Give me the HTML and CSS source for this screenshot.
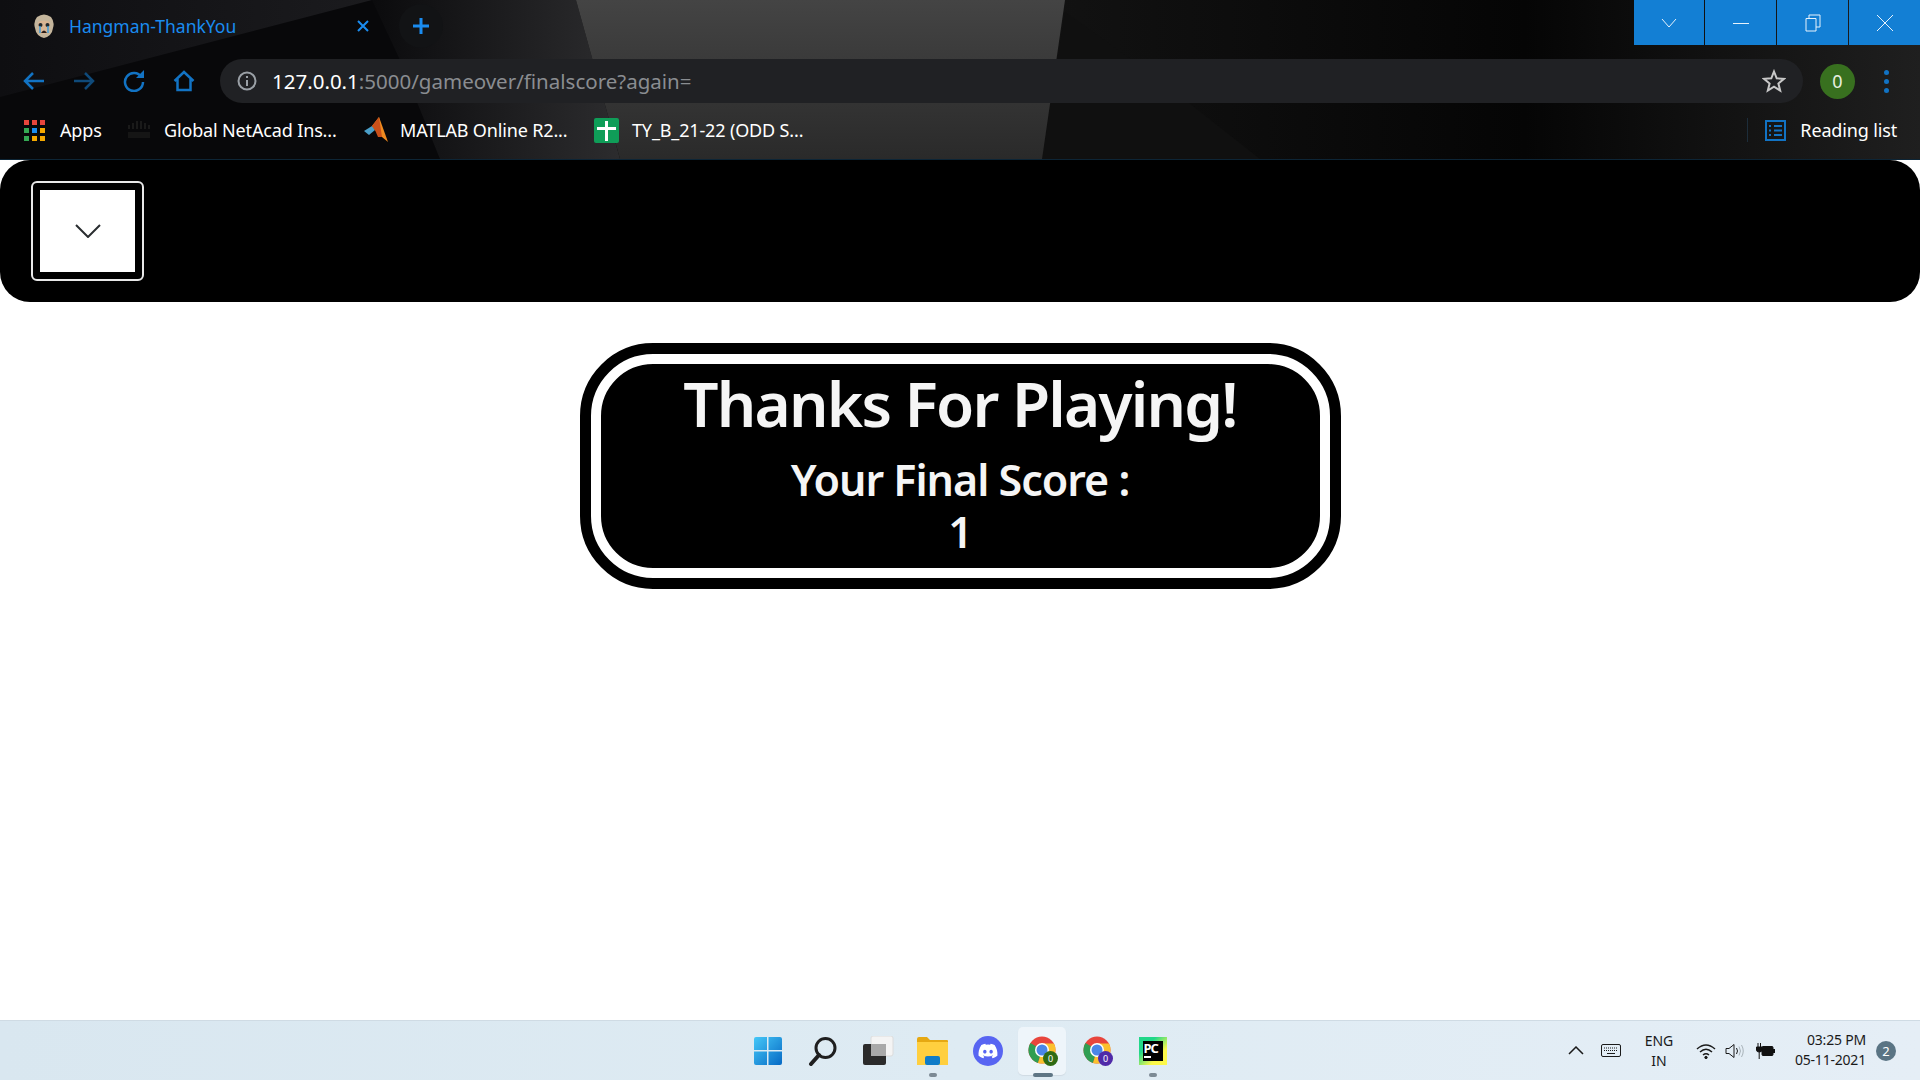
FILE: index.html
```html
<!DOCTYPE html>
<html lang="en">
<head>
    <meta charset="UTF-8">
    <title>Hangman-ThankYou</title>
    <link rel="stylesheet" href="styles.css">
</head>
<body>

<!-- Browser frame -->
<header class="browser">
    <svg class="browser-bg" width="1920" height="159" viewBox="0 0 1920 159">
        <defs>
            <linearGradient id="greyShard" x1="0" y1="0" x2="0" y2="1">
                <stop offset="0" stop-color="#444444"/>
                <stop offset="1" stop-color="#2a2a2a"/>
            </linearGradient>
            <linearGradient id="topLeftShard" x1="0" y1="0" x2="1" y2="0">
                <stop offset="0" stop-color="#0e0e11"/>
                <stop offset="1" stop-color="#1b1b1e"/>
            </linearGradient>
            <linearGradient id="midShard" x1="0" y1="0" x2="1" y2="0">
                <stop offset="0" stop-color="#0b0b0d"/>
                <stop offset="1" stop-color="#2c2c2e"/>
            </linearGradient>
            <linearGradient id="rightShard" x1="0" y1="0" x2="1" y2="0">
                <stop offset="0" stop-color="#121212"/>
                <stop offset=".55" stop-color="#050505"/>
                <stop offset="1" stop-color="#1f1f1f"/>
            </linearGradient>
        </defs>
        <rect width="1920" height="159" fill="#08080a"/>
        <polygon points="0,0 372,0 0,97" fill="url(#topLeftShard)"/>
        <polygon points="372,0 576,0 620,159 440,159 400,60" fill="url(#midShard)"/>
        <polygon points="1050,0 1920,0 1920,159 1042,159" fill="url(#rightShard)"/>
        <polygon points="1065,12 1160,80 1260,159 1042,159" fill="#101010"/>
        <polygon points="576,0 1065,0 1042,159 620,159" fill="url(#greyShard)"/>
    </svg>

    <div class="tab-row">
        <div class="tab">
            <svg class="favicon" width="24" height="26" viewBox="0 0 24 26">
                <path d="M5 4 Q12 -1 19 4 Q23 9 21 15 Q20 23 12 25 Q4 23 3 15 Q1 9 5 4z" fill="#c4b59c"/>
                <path d="M6 9 Q12 6 18 9 L17 19 Q12 23 7 19z" fill="#d9b594"/>
                <circle cx="8.500" cy="12" r="2" fill="#20262c"/>
                <circle cx="15.500" cy="12" r="2" fill="#20262c"/>
                <path d="M8 13 V20 M16 13 V20" stroke="#3f9ad6" stroke-width="1.500"/>
                <path d="M9 20 Q12 15 15 20z" fill="#2a1c16"/>
            </svg>
            <span class="tab-title">Hangman-ThankYou</span>
            <svg class="tab-close" width="12" height="12" viewBox="0 0 12 12"><path d="M1 1 L11 11 M11 1 L1 11"/></svg>
        </div>
        <div class="new-tab">
            <svg width="18" height="18" viewBox="0 0 18 18"><path d="M9 1 V17 M1 9 H17"/></svg>
        </div>
        <div class="window-buttons">
            <div class="win-btn"><svg width="16" height="16" viewBox="0 0 16 16"><path d="M1 4 L8 12 L15 4"/></svg></div>
            <div class="win-btn"><svg width="16" height="16" viewBox="0 0 16 16"><path d="M0 8.500 H16"/></svg></div>
            <div class="win-btn"><svg width="16" height="18" viewBox="0 0 16 18"><path d="M1 4.500 H11 V17 H1z M4 4.500 V1 H15 V13 H11"/></svg></div>
            <div class="win-btn"><svg width="18" height="18" viewBox="0 0 18 18"><path d="M1 1 L17 17 M17 1 L1 17"/></svg></div>
        </div>
    </div>

    <div class="toolbar">
        <svg class="tool-icon" width="22" height="20" viewBox="0 0 22 20"><path d="M21 10 H2 M10 2 L2 10 L10 18"/></svg>
        <svg class="tool-icon dim" width="22" height="20" viewBox="0 0 22 20"><path d="M1 10 H20 M12 2 L20 10 L12 18"/></svg>
        <svg class="tool-icon" width="22" height="22" viewBox="0 0 22 22"><path d="M18.500 7 A9 9 0 1 0 20 12"/><path class="fill" d="M13 8 L21 8 L21 0z"/></svg>
        <svg class="tool-icon" width="22" height="22" viewBox="0 0 22 22"><path d="M1.500 11 L11 2 L20.500 11 M4.500 9 V20 H17.500 V9"/></svg>
        <div class="omnibox">
            <svg class="info" width="20" height="20" viewBox="0 0 20 20">
                <circle cx="10" cy="10" r="8.500"/>
                <path d="M10 9 V15 M10 5 V7"/>
            </svg>
            <span class="url"><span class="url-host">127.0.0.1</span>:5000/gameover/finalscore?again=</span>
            <svg class="star" width="24" height="24" viewBox="0 0 24 24"><path d="M12 2.500 L14.700 9.300 L22 9.800 L16.400 14.500 L18.200 21.600 L12 17.700 L5.800 21.600 L7.600 14.500 L2 9.800 L9.300 9.300z"/></svg>
        </div>
        <div class="avatar">0</div>
        <div class="kebab"><i></i><i></i><i></i></div>
    </div>

    <div class="bookmarks">
        <div class="bookmark apps">
            <div class="apps-grid">
                <i class="red"></i><i class="red"></i><i class="red"></i>
                <i class="green"></i><i class="blue"></i><i class="yellow"></i>
                <i class="green"></i><i class="yellow"></i><i class="yellow"></i>
            </div>
            <span>Apps</span>
        </div>
        <div class="bookmark netacad">
            <svg width="24" height="18" viewBox="0 0 24 18"><path d="M2 4 V8 M6 2 V8 M10 0 V8 M14 0 V8 M18 2 V8 M22 4 V8" stroke="#1a1a1a" stroke-width="2"/><rect x="1" y="11" width="22" height="6" fill="#151515"/></svg>
            <span>Global NetAcad Ins...</span>
        </div>
        <div class="bookmark matlab">
            <svg width="24" height="26" viewBox="0 0 24 26">
                <path d="M0 14 L8 9 L11 13 L5 18z" fill="#4a9fc9"/>
                <path d="M8 9 L15 0 L24 25 L18 20 L11 13z" fill="#ef8a1f"/>
                <path d="M15 0 L8 9 L11 13 L14 20 L18 20z" fill="#c9501a"/>
            </svg>
            <span>MATLAB Online R2...</span>
        </div>
        <div class="bookmark sheet">
            <div class="sheet-icon"><i class="sheet-v"></i><i class="sheet-h"></i></div>
            <span>TY_B_21-22 (ODD S...</span>
        </div>
        <div class="reading-list">
            <svg class="reading-icon" width="21" height="21" viewBox="0 0 21 21">
                <path d="M1 1 H20 V20 H1z"/>
                <path d="M4 6 H6 M4 10.500 H6 M4 15 H6 M9 6 H17 M9 10.500 H17 M9 15 H17"/>
            </svg>
            <span>Reading list</span>
        </div>
    </div>
</header>

<!-- Page content -->
<main class="page">
    <nav class="navbar">
        <button type="button" class="nav-toggle">
            <span class="nav-toggle-inner">
                <svg width="26" height="14" viewBox="0 0 26 14"><path d="M1 1 L13 13 L25 1"/></svg>
            </span>
        </button>
    </nav>

    <section class="score-card">
        <h1>Thanks For Playing!</h1>
        <h2>Your Final Score :</h2>
        <h2>1</h2>
    </section>
</main>

<!-- Windows taskbar -->
<footer class="taskbar">
    <div class="taskbar-apps">
        <div class="task-app">
            <svg width="30" height="30" viewBox="0 0 30 30">
                <defs>
                    <linearGradient id="winBlue" x1="0" y1="0" x2="1" y2="1">
                        <stop offset="0" stop-color="#45c8f8"/>
                        <stop offset="1" stop-color="#0669c4"/>
                    </linearGradient>
                </defs>
                <path d="M1 3 Q1 1 3 1 H14 V14 H1z M15.500 1 H27 Q29 1 29 3 V14 H15.500z M1 15.500 H14 V29 H3 Q1 29 1 27z M15.500 15.500 H29 V27 Q29 29 27 29 H15.500z" fill="url(#winBlue)"/>
            </svg>
        </div>
        <div class="task-app">
            <svg width="30" height="30" viewBox="0 0 30 30"><circle cx="17.500" cy="12" r="9.500" fill="none" stroke="#1f1f1f" stroke-width="3"/><path d="M11 19 L3 28" stroke="#1f1f1f" stroke-width="4" stroke-linecap="round"/></svg>
        </div>
        <div class="task-app">
            <svg width="32" height="30" viewBox="0 0 32 30"><rect x="9" y="0" width="22" height="20" rx="2" fill="#f4f4f4" stroke="#dcdcdc"/><rect x="1" y="8" width="23" height="21" rx="2" fill="#2b2b2b"/><rect x="9" y="8" width="15" height="12" fill="#a9a9a9"/></svg>
        </div>
        <div class="task-app running">
            <svg width="31" height="28" viewBox="0 0 31 28"><path d="M0 2 Q0 0 2 0 H10 L13 3 H30 Q31 3 31 4 V27 Q31 28 30 28 H1 Q0 28 0 27z" fill="#e6a812"/><rect x="0" y="5" width="31" height="23" fill="#ffcf3f"/><rect x="8" y="19" width="15" height="9" rx="2" fill="#0f7cc8"/></svg>
        </div>
        <div class="task-app">
            <svg width="30" height="30" viewBox="0 0 30 30">
                <circle cx="15" cy="15" r="15" fill="#5865f2"/>
                <g transform="translate(5.500 5.500) scale(.79)"><path fill="#fff" d="M20.317 4.37a19.791 19.791 0 0 0-4.885-1.515.074.074 0 0 0-.079.037c-.21.375-.444.864-.608 1.25a18.27 18.27 0 0 0-5.487 0 12.64 12.64 0 0 0-.617-1.25.077.077 0 0 0-.079-.037A19.736 19.736 0 0 0 3.677 4.37a.07.07 0 0 0-.032.027C.533 9.046-.32 13.58.099 18.057a.082.082 0 0 0 .031.057 19.9 19.9 0 0 0 5.993 3.03.078.078 0 0 0 .084-.028 14.09 14.09 0 0 0 1.226-1.994.076.076 0 0 0-.041-.106 13.107 13.107 0 0 1-1.872-.892.077.077 0 0 1-.008-.128 10.2 10.2 0 0 0 .372-.292.074.074 0 0 1 .077-.01c3.928 1.793 8.18 1.793 12.062 0a.074.074 0 0 1 .078.01c.12.098.246.198.373.292a.077.077 0 0 1-.006.127 12.299 12.299 0 0 1-1.873.892.077.077 0 0 0-.041.107c.36.698.772 1.362 1.225 1.993a.076.076 0 0 0 .084.028 19.839 19.839 0 0 0 6.002-3.03.077.077 0 0 0 .032-.054c.5-5.177-.838-9.674-3.549-13.66a.061.061 0 0 0-.031-.03zM8.02 15.33c-1.183 0-2.157-1.085-2.157-2.419 0-1.333.956-2.419 2.157-2.419 1.21 0 2.176 1.096 2.157 2.42 0 1.333-.956 2.418-2.157 2.418zm7.975 0c-1.183 0-2.157-1.085-2.157-2.419 0-1.333.955-2.419 2.157-2.419 1.21 0 2.176 1.096 2.157 2.42 0 1.333-.946 2.418-2.157 2.418z"/></g>
            </svg>
        </div>
        <div class="task-app active">
            <svg width="30" height="30" viewBox="0 0 30 30">
                <circle cx="14" cy="14" r="13.500" fill="#e8453c"/>
                <path d="M14 14 L2.500 7 A13.500 13.500 0 0 0 10 27z" fill="#2f9e52"/>
                <path d="M14 14 L27.500 14 A13.500 13.500 0 0 1 10 27z" fill="#fbc02d"/>
                <path d="M14 7.500 H26 A13.500 13.500 0 0 1 27.500 14 H14z" fill="#fbc02d"/>
                <circle cx="14" cy="14" r="7" fill="#fff"/>
                <circle cx="14" cy="14" r="5.500" fill="#4a86e8"/>
                <circle cx="22.500" cy="22.500" r="7.500" fill="#2f6b14"/>
                <text x="22.500" y="26" class="chrome-badge">0</text>
            </svg>
        </div>
        <div class="task-app">
            <svg width="30" height="30" viewBox="0 0 30 30">
                <circle cx="14" cy="14" r="13.500" fill="#e8453c"/>
                <path d="M14 14 L2.500 7 A13.500 13.500 0 0 0 10 27z" fill="#2f9e52"/>
                <path d="M14 14 L27.500 14 A13.500 13.500 0 0 1 10 27z" fill="#fbc02d"/>
                <path d="M14 7.500 H26 A13.500 13.500 0 0 1 27.500 14 H14z" fill="#fbc02d"/>
                <circle cx="14" cy="14" r="7" fill="#fff"/>
                <circle cx="14" cy="14" r="5.500" fill="#4a86e8"/>
                <circle cx="22.500" cy="22.500" r="7.500" fill="#4f2aa8"/>
                <text x="22.500" y="26" class="chrome-badge">0</text>
            </svg>
        </div>
        <div class="task-app running">
            <div class="pycharm">
                <div class="pycharm-inner">
                    <span>PC</span>
                    <i></i>
                </div>
            </div>
        </div>
    </div>

    <div class="tray">
        <svg class="tray-chevron" width="16" height="9" viewBox="0 0 16 9"><path d="M1 8 L8 1 L15 8"/></svg>
        <svg class="tray-keyboard" width="20" height="13" viewBox="0 0 20 13"><rect x=".5" y=".5" width="19" height="12" rx="1.500"/><path d="M3 4 H17 M3 6.500 H17" stroke-dasharray="1 1"/><path d="M6 9.500 H14"/></svg>
        <div class="tray-lang">ENG<br>IN</div>
        <svg class="tray-wifi" width="20" height="16" viewBox="0 0 20 16"><path d="M1 6 Q10 -2 19 6 M4 9 Q10 3.500 16 9 M7 12 Q10 9.500 13 12"/><circle cx="10" cy="14.500" r="1.200"/></svg>
        <svg class="tray-sound" width="20" height="16" viewBox="0 0 20 16"><path d="M1 5.500 H4 L9 1.500 V14.500 L4 10.500 H1z M11.500 5 Q13.500 8 11.500 11"/><path class="faint" d="M14 3.500 Q17 8 14 12.500 M16.500 2 Q20 8 16.500 14"/></svg>
        <svg class="tray-battery" width="20" height="16" viewBox="0 0 20 16"><path d="M3 0 V4 M5.500 0 V4 M1.500 4 H7 V7 Q7 9 4.200 9 Q1.500 9 1.500 7z M4.200 9 V16"/><rect x="7" y="3.500" width="11" height="9" rx="1"/><rect x="18" y="6.500" width="2" height="3"/></svg>
        <div class="tray-clock">03:25 PM<br>05-11-2021</div>
        <div class="tray-badge">2</div>
    </div>
</footer>

</body>
</html>
```

FILE: styles.css
```css
* {
    box-sizing: border-box;
}
html, body {
    height: 100%;
}
body {
    margin: 0;
    display: flex;
    flex-direction: column;
    height: 1080px;
    overflow: hidden;
    font-family: "Noto Sans", "Open Sans", sans-serif;
    background-color: #fff;
}

/* Browser frame */
.browser {
    position: relative;
    height: 160px;
    flex: none;
    border-bottom: 1px solid #0d2536;
    background-color: #08080a;
}
.browser-bg {
    position: absolute;
    top: 0;
    left: 0;
}
.tab-row, .toolbar, .bookmarks {
    position: relative;
    display: flex;
}
.tab-row {
    height: 59px;
    align-items: flex-start;
}
.tab {
    display: flex;
    align-items: center;
    width: 372px;
    height: 52px;
    padding-left: 32px;
}
.favicon {
    flex: none;
}
.tab-title {
    margin-left: 13px;
    font-size: 17.500px;
    color: #1a8cf0;
}
.tab-close {
    margin-left: auto;
    margin-right: 3px;
}
.tab-close path {
    fill: none;
    stroke: #1a8cf0;
    stroke-width: 2;
}
.new-tab {
    display: flex;
    align-items: center;
    justify-content: center;
    width: 44px;
    height: 44px;
    margin: 4px 0 0 27px;
    border-radius: 50%;
    background-color: #121315;
}
.new-tab path {
    fill: none;
    stroke: #1a8cf0;
    stroke-width: 3;
}
.window-buttons {
    display: flex;
    gap: 1px;
    margin-left: auto;
    height: 45px;
}
.win-btn {
    display: flex;
    align-items: center;
    justify-content: center;
    width: 71px;
    background-color: #137fd4;
}
.win-btn:first-child {
    width: 70px;
}
.win-btn path {
    fill: none;
    stroke: #e8f3fc;
    stroke-width: 1;
}

.toolbar {
    height: 44px;
    align-items: center;
    padding-left: 23px;
}
.tool-icon {
    flex: none;
    margin-right: 28px;
}
.tool-icon path {
    fill: none;
    stroke: #1273c4;
    stroke-width: 2.500;
}
.tool-icon path.fill {
    fill: #1273c4;
    stroke: none;
}
.tool-icon.dim path {
    stroke: #0f4a7a;
}
.omnibox {
    display: flex;
    align-items: center;
    width: 1583px;
    height: 44px;
    margin-left: -3px;
    padding: 0 17px 0 17px;
    border-radius: 22px;
    background-color: #202124;
}
.info circle, .info path {
    fill: none;
    stroke: #9aa0a6;
    stroke-width: 2;
}
.url {
    margin-left: 15px;
    font-size: 20.500px;
    color: #8a8d91;
}
.url-host {
    color: #fff;
}
.star {
    margin-left: auto;
}
.star path {
    fill: none;
    stroke: #c8c8c8;
    stroke-width: 2;
}
.avatar {
    display: flex;
    align-items: center;
    justify-content: center;
    flex: none;
    width: 35px;
    height: 35px;
    margin-left: 17px;
    border-radius: 50%;
    background-color: #38701f;
    font-size: 18px;
    color: #e8f0e0;
}
.kebab {
    display: flex;
    flex-direction: column;
    gap: 4px;
    margin-left: 29px;
}
.kebab i {
    display: block;
    width: 5px;
    height: 5px;
    border-radius: 50%;
    background-color: #1273c4;
}

.bookmarks {
    height: 54px;
    align-items: center;
    padding-left: 24px;
}
.bookmark {
    display: flex;
    align-items: center;
    font-size: 18px;
    letter-spacing: -0.15px;
    color: #fff;
    white-space: nowrap;
}
.apps {
    width: 103px;
}
.apps-grid {
    display: grid;
    grid-template-columns: repeat(3, 5px);
    gap: 3px;
    margin-right: 15px;
}
.apps-grid i {
    height: 5px;
}
.red { background-color: #e8453c; }
.green { background-color: #34a853; }
.blue { background-color: #1a8cf0; }
.yellow { background-color: #f5a800; }
.netacad {
    width: 237px;
}
.netacad svg {
    margin-right: 13px;
}
.matlab {
    width: 230px;
}
.matlab svg {
    margin-right: 12px;
}
.sheet-icon {
    position: relative;
    width: 25px;
    height: 25px;
    margin-right: 13px;
    border-radius: 2px;
    background-color: #0f9d58;
}
.sheet-v, .sheet-h {
    position: absolute;
    background-color: #fff;
}
.sheet-v {
    top: 3px;
    left: 11px;
    width: 3px;
    height: 20px;
}
.sheet-h {
    top: 9px;
    left: 3px;
    width: 19px;
    height: 3px;
}
.reading-list {
    display: flex;
    align-items: center;
    margin-left: auto;
    padding-left: 17px;
    padding-right: 23px;
    border-left: 1px solid #1d2d3a;
    font-size: 18px;
    letter-spacing: -0.15px;
    color: #fff;
}
.reading-icon {
    margin-right: 14px;
}
.reading-icon path {
    fill: none;
    stroke: #1273c4;
    stroke-width: 2;
}

/* Page content */
.page {
    flex: 1;
    min-height: 0;
}
.navbar {
    display: flex;
    align-items: center;
    height: 142px;
    padding-left: 31px;
    border-radius: 30px;
    background-color: #000;
}
.nav-toggle {
    width: 113px;
    height: 100px;
    padding: 7px;
    border: 2px solid #e8e8e8;
    border-radius: 6px;
    background-color: #000;
}
.nav-toggle-inner {
    display: flex;
    align-items: center;
    justify-content: center;
    height: 100%;
    background-color: #fff;
}
.nav-toggle-inner path {
    fill: none;
    stroke: #2a2d30;
    stroke-width: 2;
}
.score-card {
    width: 739px;
    height: 224px;
    margin: 52px auto 0;
    border: 10px solid #fff;
    border-radius: 62px;
    outline: 11px solid #000;
    background-color: #000;
    color: #f5f5f5;
    text-align: center;
}
.score-card h1 {
    margin: 0 0 12px;
    font-size: 62px;
    font-weight: 600;
    letter-spacing: -1.8px;
    line-height: 78px;
}
.score-card h2 {
    margin: 0;
    font-size: 43px;
    font-weight: 600;
    letter-spacing: -1px;
    line-height: 52px;
}

/* Windows taskbar */
.taskbar {
    display: grid;
    grid-template-columns: 1fr auto 1fr;
    flex: none;
    height: 60px;
    border-top: 1px solid #cfdbe4;
    background: linear-gradient(90deg, #d9e7f0, #deebf3 50%, #e5eef6);
}
.taskbar-apps {
    grid-column: 2;
    display: flex;
    width: 440px;
}
.task-app {
    position: relative;
    display: flex;
    align-items: center;
    justify-content: center;
    width: 55px;
    height: 59px;
}
.task-app.running::after, .task-app.active::after {
    content: "";
    position: absolute;
    bottom: 3px;
    left: 50%;
    width: 8px;
    height: 4px;
    margin-left: -4px;
    border-radius: 2px;
    background-color: #7c8a94;
}
.task-app.active::before {
    content: "";
    position: absolute;
    top: 6px;
    left: 3px;
    width: 48px;
    height: 48px;
    border-radius: 5px;
    background-color: #eef5fa;
    box-shadow: 0 1px 1px #d0dbe3;
}
.task-app.active::after {
    width: 20px;
    margin-left: -10px;
    background-color: #5f7685;
}
.task-app svg {
    position: relative;
}
.chrome-badge {
    font-size: 9px;
    fill: #fff;
    text-anchor: middle;
}
.pycharm {
    width: 28px;
    height: 28px;
    padding: 4px;
    background: linear-gradient(135deg, #21d789 30%, #fcf84a 70%);
}
.pycharm-inner {
    height: 20px;
    padding-left: 1px;
    background-color: #000;
    color: #fff;
    font-size: 13px;
    font-weight: 700;
    letter-spacing: -1px;
    line-height: 14px;
}
.pycharm-inner span {
    display: block;
}
.pycharm-inner i {
    display: block;
    width: 7px;
    height: 2px;
    margin-top: 1px;
    background-color: #fff;
}

.tray {
    grid-column: 3;
    display: flex;
    align-items: center;
    justify-content: flex-end;
    padding-right: 24px;
    color: #1a1a1a;
    font-size: 14px;
}
.tray path, .tray rect, .tray circle {
    fill: none;
    stroke: #1a1a1a;
    stroke-width: 1;
}
.tray-chevron {
    margin-right: 17px;
}
.tray-chevron path {
    stroke-width: 1.500;
}
.tray-keyboard {
    margin-right: 21px;
}
.tray-lang {
    width: 34px;
    margin-right: 20px;
    line-height: 20px;
    text-align: center;
}
.tray-wifi {
    margin-right: 9px;
}
.tray-wifi path {
    stroke-width: 1.500;
}
.tray .tray-wifi circle {
    fill: #1a1a1a;
}
.tray-sound {
    margin-right: 10px;
}
.tray .faint {
    stroke: #a9b3ba;
}
.tray .tray-battery path, .tray .tray-battery rect {
    fill: #111;
    stroke: #111;
}
.tray-clock {
    width: 78px;
    margin-left: 13px;
    padding-bottom: 2px;
    letter-spacing: -0.2px;
    line-height: 20px;
    text-align: right;
    white-space: nowrap;
}
.tray-badge {
    display: flex;
    align-items: center;
    justify-content: center;
    width: 20px;
    height: 20px;
    margin-left: 10px;
    border-radius: 50%;
    background-color: #5a7484;
    color: #fff;
    font-size: 13px;
}
```
